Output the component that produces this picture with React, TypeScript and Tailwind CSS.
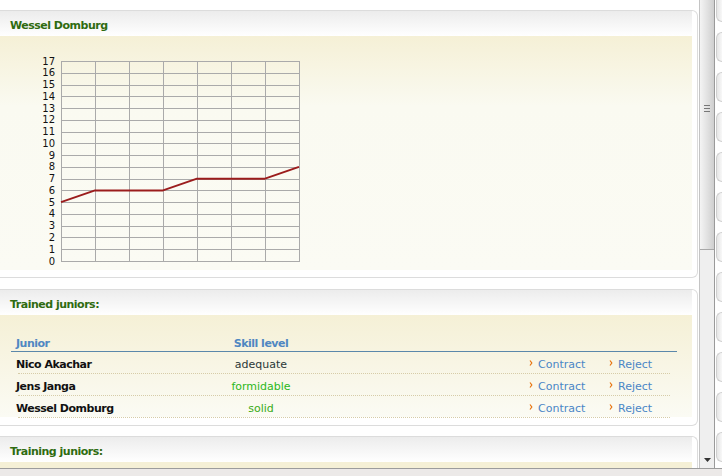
import React from "react";

const values = [5, 6, 6, 6, 7, 7, 7, 8];

function Chart() {
  const top = 25;
  const bottom = 225;
  const left = 61;
  const colW = 34;
  const rowH = (bottom - top) / 17;
  const rows = Array.from({ length: 18 }, (_, i) => i);
  const cols = Array.from({ length: 8 }, (_, j) => j);
  const pts = values
    .map((v, j) => `${left + j * colW},${bottom - v * rowH}`)
    .join(" ");
  return (
    <svg width="310" height="234" className="block" style={{ fontFamily: "'DejaVu Sans', sans-serif" }}>
      {rows.map((i) => {
        const y = Math.round(top + i * rowH) + 0.5;
        return <line key={"h" + i} x1={left} x2={left + 7 * colW} y1={y} y2={y} stroke="#aaaaaa" strokeWidth="1" />;
      })}
      {cols.map((j) => {
        const x = left + j * colW + 0.5;
        return <line key={"v" + j} x1={x} x2={x} y1={top} y2={bottom + 1} stroke="#aaaaaa" strokeWidth="1" />;
      })}
      {rows.map((i) => {
        const v = 17 - i;
        const y = top + i * rowH + 3.5;
        return (
          <text key={"t" + i} x={55} y={y} textAnchor="end" fontSize="10" fill="#111">
            {v}
          </text>
        );
      })}
      <polyline points={pts} fill="none" stroke="#9b1c1c" strokeWidth="2" strokeLinejoin="round" />
    </svg>
  );
}

function Arrow() {
  return (
    <svg width="4" height="6" className="inline-block mr-[5px] -mt-[4px] align-middle">
      <path d="M1 0.5 L2.8 3 L1 5.5" fill="none" stroke="#e8720c" strokeWidth="1.2" />
    </svg>
  );
}

function PanelHeader({ title }: { title: string }) {
  return (
    <div className="h-[25px] flex items-center pl-[10px] pt-[5px] bg-gradient-to-b from-[#ececec] to-white">
      <span className="font-bold text-[11px] tracking-[-0.5px] text-[#2f6b10]">{title}</span>
    </div>
  );
}

const juniors = [
  { name: "Nico Akachar", skill: "adequate", color: "text-[#2b3838]" },
  { name: "Jens Janga", skill: "formidable", color: "text-[#2cb81a]" },
  { name: "Wessel Domburg", skill: "solid", color: "text-[#3aab14]" },
];

export default function App() {
  return (
    <div
      className="w-[722px] h-[476px] overflow-hidden bg-white flex flex-col text-[11px] text-black"
      style={{ fontFamily: "'DejaVu Sans', Verdana, sans-serif" }}
    >
      <div className="flex flex-1 min-h-0">
        {/* main content */}
        <div className="w-[699px] pt-[10px] flex flex-col">
          {/* Panel 1 */}
          <div className="w-[698px] border-y border-r border-[#dcdcdc] rounded-r-[6px] pr-[5px] pb-[7px]">
            <PanelHeader title="Wessel Domburg" />
            <div className="h-[234px] bg-gradient-to-b from-[#f5f0d6] via-[#fafaf1] via-30% to-[#fbfbf4]">
              <Chart />
            </div>
          </div>

          {/* Panel 2 */}
          <div className="mt-[11px] w-[698px] border-y border-r border-[#dcdcdc] rounded-r-[6px] pr-[5px] pb-[8px]">
            <PanelHeader title="Trained juniors:" />
            <div className="h-[102px] bg-gradient-to-b from-[#f5f0d6] to-[#fbfbf4] pt-[19px]">
              <div className="ml-[11px] w-[666px]">
                <div className="h-[18px] flex items-center pt-[3px] border-b border-[#5b88aa] font-bold tracking-[-0.5px] text-[#4f87c2]">
                  <div className="w-[189px] pl-[5px]">Junior</div>
                  <div className="w-[122px] text-center">Skill level</div>
                </div>
                {juniors.map((j) => (
                  <div key={j.name}>
                    <div className="h-[21px] flex items-center pt-[5px]">
                      <div className="w-[189px] pl-[5px] font-bold tracking-[-0.5px] text-[#111]">{j.name}</div>
                      <div className={"w-[122px] text-center " + j.color}>{j.skill}</div>
                      <div className="w-[207px]" />
                      <div className="w-[80px] text-[#4a86c6] flex items-center">
                        <Arrow />
                        Contract
                      </div>
                      <div className="text-[#4a86c6] flex items-center">
                        <Arrow />
                        Reject
                      </div>
                    </div>
                    <div className="mx-[7px] border-b border-dotted border-[#d6cca8]" />
                  </div>
                ))}
              </div>
            </div>
          </div>

          {/* Panel 3 */}
          <div className="mt-[10px] w-[698px] border-t border-r border-[#dcdcdc] rounded-tr-[6px] pr-[5px]">
            <PanelHeader title="Training juniors:" />
            <div className="h-[20px] bg-[#f5f0d6]" />
          </div>
        </div>

        {/* vertical scrollbar */}
        <div className="w-[15px] border-l border-[#c4c4c4] bg-[#efefef] flex flex-col">
          <div className="h-[250px] border-b border-[#a8a8a8] bg-gradient-to-r from-[#f4f4f4] via-[#e2e2e2] to-[#cfcfcf] flex flex-col items-center pt-[105px]">
            <div className="w-[6px] h-[1px] bg-[#777] mb-[2px]" />
            <div className="w-[6px] h-[1px] bg-[#777] mb-[2px]" />
            <div className="w-[6px] h-[1px] bg-[#777]" />
          </div>
          <div className="flex-1 flex items-end justify-center pb-[6px]">
            <svg width="7" height="4">
              <path d="M0 0 L7 0 L3.5 4 Z" fill="#333" />
            </svg>
          </div>
        </div>

        {/* right strip with rounded tabs */}
        <div className="w-[8px] border-l border-[#9a9a9a] bg-white flex flex-col gap-[10px] pl-[1px] -mt-[8px]">
          {Array.from({ length: 12 }, (_, i) => (
            <div
              key={i}
              className="h-[30px] shrink-0 rounded-l-[6px] border border-r-0 border-[#cfcfcf] bg-gradient-to-r from-[#e6e6e6] to-[#f8f8f8]"
            />
          ))}
        </div>
      </div>

      {/* bottom bar */}
      <div className="h-[8px] border-t border-[#9c9c9c] bg-[#ece9e8]" />
    </div>
  );
}
